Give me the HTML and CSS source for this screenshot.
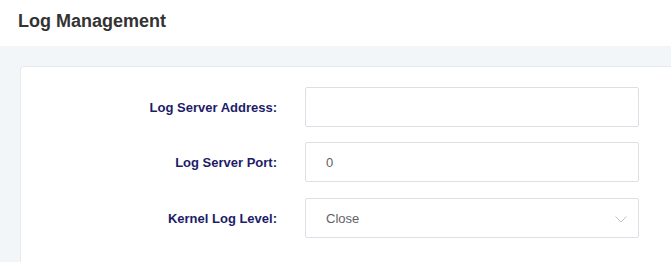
FILE: index.html
```html
<!DOCTYPE html>
<html lang="en">
<head>
    <meta charset="UTF-8">
    <meta name="viewport" content="width=device-width, initial-scale=1.0">
    <title>Log Management</title>
    <link rel="stylesheet" href="styles.css">
</head>
<body>
    <div class="page-header">
        <h2>Log Management</h2>
    </div>

    <div class="page-body">
        <div class="card">
            <form class="log-form">
                <div class="form-row">
                    <label for="serverAddress">Log Server Address:</label>
                    <input type="text" id="serverAddress" value="">
                </div>

                <div class="form-row">
                    <label for="serverPort">Log Server Port:</label>
                    <input type="text" id="serverPort" value="0">
                </div>

                <div class="form-row">
                    <label for="kernelLevel">Kernel Log Level:</label>
                    <div class="select-box" id="kernelLevel">
                        <span>Close</span>
                        <svg class="arrow" width="12" height="7" viewBox="0 0 12 7">
                            <path d="M0.5 0.5 L6 6 L11.5 0.5" fill="none" stroke="#c0c4cc" stroke-width="1"/>
                        </svg>
                    </div>
                </div>
            </form>
        </div>
    </div>
</body>
</html>
```

FILE: styles.css
```css
* {
    margin: 0;
    padding: 0;
    box-sizing: border-box;
    font-family: "Liberation Sans", Arial, sans-serif;
}

html,
body {
    overflow: hidden;
}

body {
    width: 671px;
    height: 262px;
    background-color: #f3f6f9;
}

.page-header {
    height: 46px;
    padding: 9px 18px 0;
    background-color: white;
}

.page-header h2 {
    font-size: 18px;
    line-height: 24px;
    font-weight: bold;
    color: #333;
}

.page-body {
    padding: 20px 0 0 20px;
}

.card {
    background-color: white;
    border: 1px solid #e6e9ef;
    border-right: none;
    border-bottom: none;
    border-radius: 4px 0 0 0;
    height: 196px;
    padding-top: 20px;
}

.form-row {
    display: grid;
    grid-template-columns: 256px 334px;
    column-gap: 28px;
    align-items: center;
    margin-bottom: 15px;
}

.form-row:nth-child(2) {
    margin-bottom: 16px;
}

label {
    text-align: right;
    font-size: 13px;
    font-weight: bold;
    color: #1c1c68;
}

input,
.select-box {
    height: 40px;
    width: 334px;
    padding: 0 20px;
    border: 1px solid #dcdfe6;
    border-radius: 2px;
    font-size: 13px;
    color: #606266;
    background-color: white;
}

input:focus {
    outline: none;
    border-color: #409eff;
}

.select-box {
    display: flex;
    align-items: center;
    justify-content: space-between;
    padding-right: 11px;
    cursor: pointer;
}

.select-box .arrow {
    margin-top: 2px;
}
```
